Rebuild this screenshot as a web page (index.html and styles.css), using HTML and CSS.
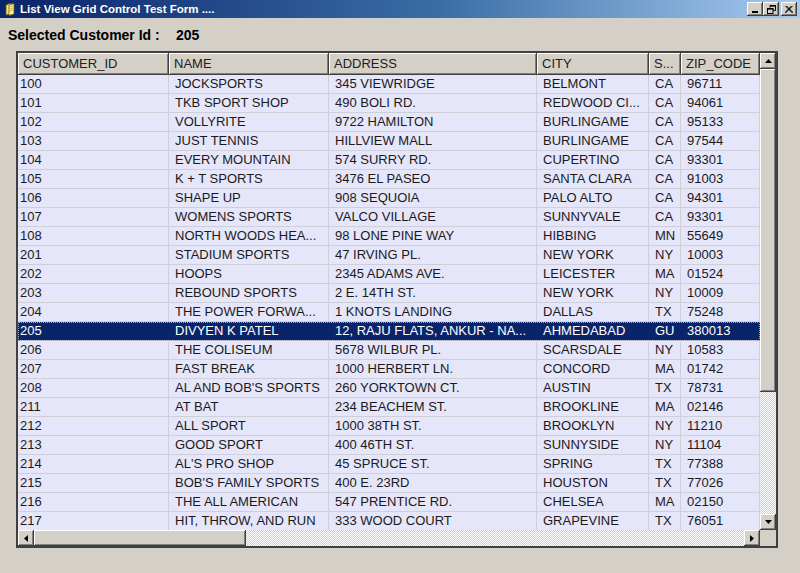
FILE: index.html
```html
<!DOCTYPE html>
<html>
<head>
<meta charset="utf-8">
<title>List View Grid Control Test Form</title>
<link rel="stylesheet" href="styles.css">
</head>
<body>
<div class="window">
  <div class="titlebar">
    <svg class="app-icon" width="14" height="14" viewBox="0 0 14 14">
      <path d="M3 3 L8 1 L8 12 L3 13 Z" fill="#f4e07a" stroke="#6b5a10" stroke-width="0.8"/>
      <path d="M6 3 L11 1.5 L11 12 L6 13.5 Z" fill="#fff3a8" stroke="#6b5a10" stroke-width="0.8"/>
      <path d="M7 5 L10 4 M7 7 L10 6 M7 9 L10 8" stroke="#b09a30" stroke-width="0.7"/>
    </svg>
    <span class="title-text">List View Grid Control Test Form ....</span>
    <div class="caption-buttons">
      <div class="cbtn"><svg width="8" height="8" viewBox="0 0 8 8"><rect x="1" y="6" width="6" height="2" fill="#000"/></svg></div>
      <div class="cbtn"><svg width="9" height="9" viewBox="0 0 9 9"><path d="M3 0.5 H8.5 V5.5 H6.5 M3 0.5 V2.5" fill="none" stroke="#000" stroke-width="1"/><rect x="3" y="0" width="6" height="1.6" fill="#000"/><rect x="0.5" y="3.5" width="5.5" height="5" fill="none" stroke="#000" stroke-width="1"/><rect x="0" y="3" width="6.5" height="1.6" fill="#000"/></svg></div>
      <div class="cbtn cbtn-close"><svg width="8" height="7" viewBox="0 0 8 7"><path d="M0.5 0 L7.5 7 M1.5 0 L8.5 7 M7.5 0 L0.5 7 M6.5 0 L-0.5 7" stroke="#000" stroke-width="1"/></svg></div>
    </div>
  </div>

  <div class="info">
    <span class="info-label">Selected Customer Id :</span>
    <span class="info-value">205</span>
  </div>

  <div class="listview">
    <div class="lv-main">
      <div class="lv-header">
        <div class="hcell">CUSTOMER_ID</div>
        <div class="hcell">NAME</div>
        <div class="hcell">ADDRESS</div>
        <div class="hcell">CITY</div>
        <div class="hcell">S...</div>
        <div class="hcell">ZIP_CODE</div>
      </div>
      <div class="lv-body" id="rows"></div>
    </div>
    <div class="vscroll">
      <div class="sbtn"><svg width="7" height="4" viewBox="0 0 7 4"><path d="M3.5 0 L7 4 L0 4 Z" fill="#000"/></svg></div>
      <div class="vthumb"></div>
      <div class="track"></div>
      <div class="sbtn"><svg width="7" height="4" viewBox="0 0 7 4"><path d="M0 0 L7 0 L3.5 4 Z" fill="#000"/></svg></div>
    </div>
    <div class="hscroll">
      <div class="sbtn"><svg width="4" height="7" viewBox="0 0 4 7"><path d="M4 0 L4 7 L0 3.5 Z" fill="#000"/></svg></div>
      <div class="hthumb"></div>
      <div class="track"></div>
      <div class="sbtn"><svg width="4" height="7" viewBox="0 0 4 7"><path d="M0 0 L4 3.5 L0 7 Z" fill="#000"/></svg></div>
    </div>
    <div class="corner"></div>
  </div>
</div>
<script src="app.js"></script>
</body>
</html>
```

FILE: app.js
```js
var data = [
  ["100","JOCKSPORTS","345 VIEWRIDGE","BELMONT","CA","96711"],
  ["101","TKB SPORT SHOP","490 BOLI RD.","REDWOOD CI...","CA","94061"],
  ["102","VOLLYRITE","9722 HAMILTON","BURLINGAME","CA","95133"],
  ["103","JUST TENNIS","HILLVIEW MALL","BURLINGAME","CA","97544"],
  ["104","EVERY MOUNTAIN","574 SURRY RD.","CUPERTINO","CA","93301"],
  ["105","K + T SPORTS","3476 EL PASEO","SANTA CLARA","CA","91003"],
  ["106","SHAPE UP","908 SEQUOIA","PALO ALTO","CA","94301"],
  ["107","WOMENS SPORTS","VALCO VILLAGE","SUNNYVALE","CA","93301"],
  ["108","NORTH WOODS HEA...","98 LONE PINE WAY","HIBBING","MN","55649"],
  ["201","STADIUM SPORTS","47 IRVING PL.","NEW YORK","NY","10003"],
  ["202","HOOPS","2345 ADAMS AVE.","LEICESTER","MA","01524"],
  ["203","REBOUND SPORTS","2 E. 14TH ST.","NEW YORK","NY","10009"],
  ["204","THE POWER FORWA...","1 KNOTS LANDING","DALLAS","TX","75248"],
  ["205","DIVYEN K PATEL","12, RAJU FLATS, ANKUR - NA...","AHMEDABAD","GU","380013"],
  ["206","THE COLISEUM","5678 WILBUR PL.","SCARSDALE","NY","10583"],
  ["207","FAST BREAK","1000 HERBERT LN.","CONCORD","MA","01742"],
  ["208","AL AND BOB'S SPORTS","260 YORKTOWN CT.","AUSTIN","TX","78731"],
  ["211","AT BAT","234 BEACHEM ST.","BROOKLINE","MA","02146"],
  ["212","ALL SPORT","1000 38TH ST.","BROOKLYN","NY","11210"],
  ["213","GOOD SPORT","400 46TH ST.","SUNNYSIDE","NY","11104"],
  ["214","AL'S PRO SHOP","45 SPRUCE ST.","SPRING","TX","77388"],
  ["215","BOB'S FAMILY SPORTS","400 E. 23RD","HOUSTON","TX","77026"],
  ["216","THE ALL AMERICAN","547 PRENTICE RD.","CHELSEA","MA","02150"],
  ["217","HIT, THROW, AND RUN","333 WOOD COURT","GRAPEVINE","TX","76051"]
];
var body = document.getElementById("rows");
data.forEach(function (r) {
  var row = document.createElement("div");
  row.className = "row" + (r[0] === "205" ? " selected" : "");
  r.forEach(function (v) {
    var c = document.createElement("div");
    c.className = "cell";
    c.textContent = v;
    row.appendChild(c);
  });
  body.appendChild(row);
});
```

FILE: styles.css
```css
html, body {
  margin: 0;
  padding: 0;
  background: #d4d0c8;
}
.window {
  width: 800px;
  height: 573px;
  background: #d4d0c8;
  font-family: "Liberation Sans", Arial, sans-serif;
  overflow: hidden;
}
.titlebar {
  height: 18px;
  background: linear-gradient(to right, #0a246a 0%, #3a6ea5 55%, #a6caf0 100%);
  display: flex;
  align-items: center;
  padding-left: 3px;
  color: #fff;
}
.app-icon {
  flex: none;
  margin-right: 3px;
}
.title-text {
  font-weight: bold;
  font-size: 11.5px;
  white-space: nowrap;
}
.caption-buttons {
  margin-left: auto;
  display: flex;
  padding-right: 3px;
}
.cbtn {
  width: 16px;
  height: 14px;
  background: #d4d0c8;
  box-shadow: inset -1px -1px #404040, inset 1px 1px #fff, inset -2px -2px #808080;
  display: flex;
  align-items: center;
  justify-content: center;
}
.cbtn-close {
  margin-left: 2px;
}
.info {
  height: 33px;
  display: flex;
  align-items: center;
  padding-left: 8px;
  font-weight: bold;
  font-size: 14px;
  color: #000;
}
.info-label {
  width: 168px;
}
.listview {
  margin-left: 16px;
  width: 758px;
  height: 493px;
  border: 2px solid #404040;
  display: grid;
  grid-template-columns: 742px 16px;
  grid-template-rows: 477px 16px;
  background: #e6e6fa;
}
.lv-main {
  overflow: hidden;
  font-size: 13px;
}
.lv-header, .row {
  display: grid;
  grid-template-columns: 151px 160px 208px 112px 32px 79px;
}
.lv-header {
  height: 22px;
  background: #d4d0c8;
}
.hcell {
  box-shadow: inset -1px -1px #404040, inset 1px 1px #fff, inset -2px -2px #808080;
  padding-left: 5px;
  line-height: 21px;
  color: #202020;
  white-space: nowrap;
  overflow: hidden;
}
.row {
  height: 19px;
  box-sizing: border-box;
  border-bottom: 1px solid #cfcfd8;
  color: #1a1a1a;
}
.cell {
  padding-left: 6px;
  line-height: 18px;
  white-space: nowrap;
  overflow: hidden;
  border-right: 1px solid #cfcfd8;
}
.cell:first-child {
  padding-left: 2px;
}
.row.selected {
  background: #0a246a;
  color: #fff;
  outline: 1px dotted #9aa6c6;
  outline-offset: -1px;
}
.row.selected .cell {
  border-right-color: #0a246a;
}
.vscroll {
  display: flex;
  flex-direction: column;
}
.hscroll {
  display: flex;
}
.sbtn {
  flex: none;
  width: 16px;
  height: 16px;
  background: #d4d0c8;
  box-shadow: inset -1px -1px #404040, inset 1px 1px #fff, inset -2px -2px #808080;
  display: flex;
  align-items: center;
  justify-content: center;
}
.vthumb {
  flex: none;
  height: 323px;
  background: #d4d0c8;
  box-shadow: inset -1px -1px #404040, inset 1px 1px #fff, inset -2px -2px #808080;
}
.hthumb {
  flex: none;
  width: 212px;
  background: #d4d0c8;
  box-shadow: inset -1px -1px #404040, inset 1px 1px #fff, inset -2px -2px #808080;
}
.track {
  flex: 1;
  background-image: repeating-conic-gradient(#d4d0c8 0 25%, #ffffff 0 50%);
  background-size: 2px 2px;
}
.corner {
  background: #d4d0c8;
}
```
